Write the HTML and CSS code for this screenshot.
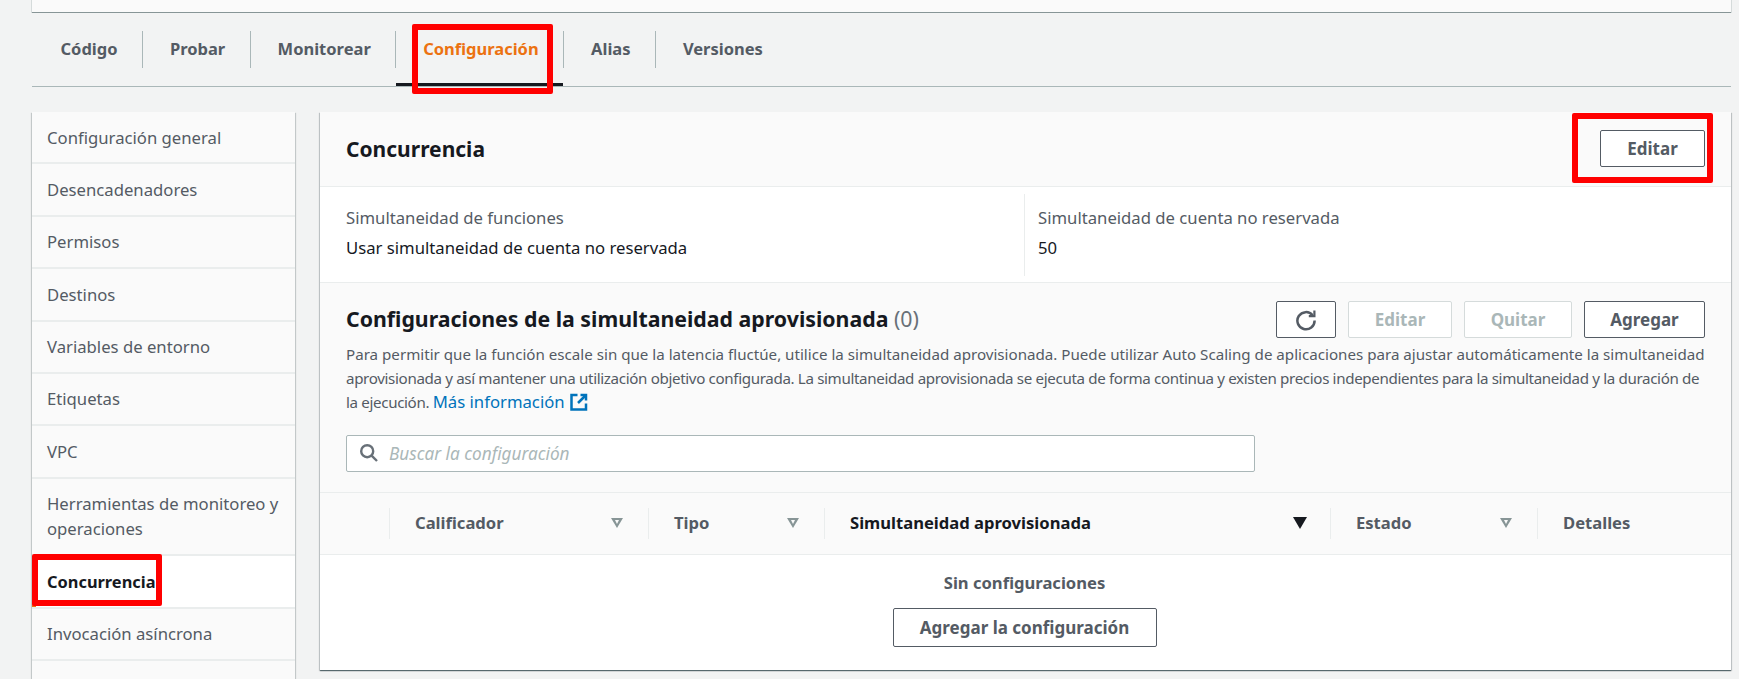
FILE: index.html
```html
<!DOCTYPE html>
<html lang="en">
<head>
  <meta charset="UTF-8">
  <title>Concurrencia</title>
  <link rel="stylesheet" href="styles.css">
</head>
<body>
  <div class="page">
    <div class="top-panel"></div>

    <ul class="tabs">
      <li class="tab">Código</li>
      <li class="tab">Probar</li>
      <li class="tab">Monitorear</li>
      <li class="tab active">Configuración</li>
      <li class="tab">Alias</li>
      <li class="tab">Versiones</li>
    </ul>

    <div class="content">
      <ul class="side-nav">
        <li>Configuración general</li>
        <li>Desencadenadores</li>
        <li>Permisos</li>
        <li>Destinos</li>
        <li>Variables de entorno</li>
        <li>Etiquetas</li>
        <li>VPC</li>
        <li class="two-lines">Herramientas de monitoreo y operaciones</li>
        <li class="current">Concurrencia</li>
        <li>Invocación asíncrona</li>
      </ul>

      <div class="card">
        <div class="card-head">
          <h2>Concurrencia</h2>
          <button class="btn btn-edit">Editar</button>
        </div>

        <div class="facts">
          <div class="fact fact-first">
            <div class="fact-label">Simultaneidad de funciones</div>
            <div>Usar simultaneidad de cuenta no reservada</div>
          </div>
          <div class="fact">
            <div class="fact-label">Simultaneidad de cuenta no reservada</div>
            <div>50</div>
          </div>
        </div>

        <div class="section">
          <div class="section-head">
            <h3>Configuraciones de la simultaneidad aprovisionada <span class="count">(0)</span></h3>
            <div class="actions">
              <button class="btn btn-icon" aria-label="Actualizar">
                <svg width="22" height="22" viewBox="0 0 22 22" fill="none" stroke="#545b64" stroke-width="2.5">
                  <path d="M17.6 6.2A8.6 8.6 0 1 0 19.6 11.5"/>
                  <path d="M19.4 1.6V7.2H13.8" stroke-width="2.2"/>
                </svg>
              </button>
              <button class="btn btn-off btn-edit2" disabled>Editar</button>
              <button class="btn btn-off btn-remove" disabled>Quitar</button>
              <button class="btn btn-add">Agregar</button>
            </div>
          </div>
          <p class="desc">
            <span class="desc-line">Para permitir que la función escale sin que la latencia fluctúe, utilice la simultaneidad aprovisionada. Puede utilizar Auto Scaling de aplicaciones para ajustar automáticamente la simultaneidad</span>
            <span class="desc-line tight">aprovisionada y así mantener una utilización objetivo configurada. La simultaneidad aprovisionada se ejecuta de forma continua y existen precios independientes para la simultaneidad y la duración de</span>
            <span class="desc-line tight">la ejecución. <a class="more" href="#">Más información <svg class="ext" width="18" height="18" viewBox="0 0 18 18" fill="none" stroke="#0073bb" stroke-width="2.5"><path d="M7.5 2H1.5V16.5H16V10.5"/><path d="M10.5 2H16V7.5"/><path d="M16 2L8 10"/></svg></a></span>
          </p>
          <div class="search">
            <svg width="20" height="20" viewBox="0 0 20 20" fill="none" stroke="#687078" stroke-width="2.4">
              <circle cx="8.2" cy="8.2" r="6"/>
              <path d="M12.6 12.6L18 18"/>
            </svg>
            <span>Buscar la configuración</span>
          </div>
        </div>

        <div class="table-head">
          <div class="col col-check"></div>
          <div class="col col-name">Calificador <i class="sort"></i></div>
          <div class="col col-type">Tipo <i class="sort"></i></div>
          <div class="col col-prov sorted">Simultaneidad aprovisionada <i class="sort-on"></i></div>
          <div class="col col-state">Estado <i class="sort"></i></div>
          <div class="col col-details">Detalles</div>
        </div>

        <div class="empty">
          <div class="empty-title">Sin configuraciones</div>
          <button class="btn btn-empty">Agregar la configuración</button>
        </div>
      </div>
    </div>

    <!-- red marks someone drew on the screenshot -->
    <div class="mark mark-tab"></div>
    <div class="mark mark-edit"></div>
    <div class="mark mark-nav"></div>
  </div>
</body>
</html>
```

FILE: styles.css
```css
html, body {
  margin: 0;
  height: 679px;
  overflow: hidden;
}

body {
  background-color: #f2f3f3;
  color: #16191f;
  font-family: "Noto Sans", sans-serif;
  font-size: 16.7px;
}

.page {
  position: relative;
  height: 679px;
  overflow: hidden;
  padding-left: 32px;
}

.top-panel {
  height: 13px;
  margin-right: 8px;
  background-color: #fafafa;
  border-bottom: 1px solid #879596;
  box-shadow: -1px 0 0 #d5dbdb, 1px 0 0 #d5dbdb;
  box-sizing: border-box;
}

/* tabs */
.tabs {
  display: flex;
  list-style: none;
  margin: 18px 8px 0 0;
  padding: 0;
  height: 55px;
  border-bottom: 1px solid #aab7b8;
}

.tab {
  position: relative;
  height: 37px;
  line-height: 35px;
  padding: 0 24.4px 0 27px;
  font-size: 16.5px;
  font-weight: 700;
  color: #545b64;
  border-right: 1px solid #aab7b8;
}

.tab:first-child {
  padding-left: 28.5px;
}

.tab:last-child {
  border-right: none;
}

.tab.active {
  color: #ec7211;
}

.tab.active::after {
  content: "";
  position: absolute;
  left: 0;
  right: 0;
  top: 52px;
  height: 3px;
  background-color: #16191f;
}

/* layout under the tabs */
.content {
  display: flex;
  align-items: flex-start;
  gap: 25px;
  margin-top: 25px;
}

.side-nav {
  list-style: none;
  margin: 0;
  padding: 0 0 60px;
  width: 263px;
  flex-shrink: 0;
  background-color: #fafafa;
  box-shadow: 0 1px 1px 0 rgba(0, 28, 36, .3), 1px 1px 1px 0 rgba(0, 28, 36, .15), -1px 1px 1px 0 rgba(0, 28, 36, .15);
}

.side-nav li {
  padding: 13.5px 15px;
  height: 23.4px;
  line-height: 24px;
  color: #545b64;
  border-bottom: 2px solid #eaeded;
}

.side-nav .two-lines {
  height: 48.5px;
  line-height: 24.5px;
}

.side-nav .current {
  background-color: #fff;
  color: #16191f;
  font-weight: 700;
  font-size: 16.4px;
  box-shadow: inset 4px 0 0 #ec7211;
}

.card {
  width: 1411px;
  background-color: #fff;
  box-shadow: 0 1px 1px 0 rgba(0, 28, 36, .5), 1px 1px 1px 0 rgba(0, 28, 36, .15), -1px 1px 1px 0 rgba(0, 28, 36, .15);
}

.card-head {
  display: flex;
  align-items: center;
  justify-content: space-between;
  height: 74px;
  padding: 0 26px;
  background-color: #fafafa;
  border-bottom: 1px solid #eaeded;
}

.card-head h2 {
  margin: 0;
  font-size: 21px;
  font-weight: 700;
}

.btn {
  height: 37px;
  padding: 0;
  background-color: #fff;
  border: 1px solid #545b64;
  border-radius: 2px;
  color: #545b64;
  font-family: inherit;
  font-size: 17px;
  font-weight: 700;
}

.btn-edit {
  width: 105px;
  margin-bottom: 1px;
}

.facts {
  display: flex;
  height: 95px;
  border-bottom: 1px solid #eaeded;
}

.fact {
  flex: 1;
  padding: 16px 13px 0;
  line-height: 30px;
}

.fact-first {
  flex: 0 0 705px;
  padding-left: 26px;
  box-sizing: border-box;
  margin-top: 7px;
  padding-top: 9px;
  margin-bottom: 6px;
  border-right: 1px solid #eaeded;
}

.fact-label {
  color: #545b64;
}

.section {
  height: 210px;
  padding: 18px 26px 0;
  background-color: #fafafa;
  border-bottom: 1px solid #eaeded;
  box-sizing: border-box;
}

.section-head {
  display: flex;
  align-items: center;
  justify-content: space-between;
  height: 37px;
}

.section-head h3 {
  margin: 0;
  font-size: 21.3px;
  font-weight: 700;
  position: relative;
  top: -1px;
}

.count {
  color: #687078;
  font-weight: 400;
}

.actions {
  display: flex;
  gap: 12px;
}

.btn-icon {
  width: 60px;
  display: flex;
  align-items: center;
  justify-content: center;
}

.btn-off {
  border-color: #d5dbdb;
  color: #aab7b8;
}

.btn-edit2 {
  width: 104px;
}

.btn-remove {
  width: 108px;
}

.btn-add {
  width: 121px;
}

.desc {
  margin: 5px 0 0;
  font-size: 15.15px;
  line-height: 23.5px;
  color: #545b64;
}

.desc-line {
  display: block;
  white-space: nowrap;
}

.tight {
  letter-spacing: -.35px;
}

.more {
  font-size: 16.7px;
  letter-spacing: 0;
  color: #0073bb;
  text-decoration: none;
}

.ext {
  vertical-align: -3px;
  margin-left: 1px;
}

.search {
  display: flex;
  align-items: center;
  gap: 10px;
  width: 909px;
  height: 37px;
  margin-top: 20px;
  padding-left: 12px;
  box-sizing: border-box;
  background-color: #fff;
  border: 1px solid #aab7b8;
  border-radius: 2px;
  color: #aab7b8;
  font-size: 17.2px;
  font-style: italic;
}

.table-head {
  display: flex;
  align-items: center;
  height: 61px;
  background-color: #fafafa;
  border-bottom: 1px solid #eaeded;
  color: #545b64;
  font-size: 16.6px;
  font-weight: 700;
}

.col {
  display: flex;
  align-items: center;
  justify-content: space-between;
  height: 31px;
  padding: 0 25px 2px;
  box-sizing: border-box;
  border-left: 1px solid #eaeded;
}

.col-check {
  width: 69px;
  border-left: none;
}

.col-name {
  width: 259px;
}

.col-type {
  width: 176px;
}

.col-prov {
  width: 506px;
}

.col-state {
  width: 207px;
}

.col-details {
  flex: 1;
}

.sorted {
  color: #16191f;
}

.sort {
  position: relative;
  width: 0;
  height: 0;
  border-left: 6.5px solid transparent;
  border-right: 6.5px solid transparent;
  border-top: 10px solid #879596;
}

.sort::after {
  content: "";
  position: absolute;
  left: -2.5px;
  top: -8px;
  border-left: 2.5px solid transparent;
  border-right: 2.5px solid transparent;
  border-top: 4px solid #fafafa;
}

.sort-on {
  width: 0;
  height: 0;
  margin-right: -2px;
  border-left: 7px solid transparent;
  border-right: 7px solid transparent;
  border-top: 12px solid #16191f;
}

.empty {
  display: flex;
  flex-direction: column;
  align-items: center;
  height: 115px;
  padding: 16px 2px 0 0;
  box-sizing: border-box;
}

.empty-title {
  line-height: 24px;
  font-weight: 700;
  font-size: 16.6px;
  color: #545b64;
}

.btn-empty {
  width: 264px;
  height: 39px;
  margin-top: 13px;
}

/* red rectangles */
.mark {
  position: absolute;
  box-sizing: border-box;
  border: 6px solid #ff0000;
  border-radius: 2px;
}

.mark-tab {
  left: 412px;
  top: 24px;
  width: 141px;
  height: 70px;
}

.mark-edit {
  left: 1572px;
  top: 113px;
  width: 141px;
  height: 70px;
}

.mark-nav {
  left: 32px;
  top: 554px;
  width: 130px;
  height: 52px;
}
```
